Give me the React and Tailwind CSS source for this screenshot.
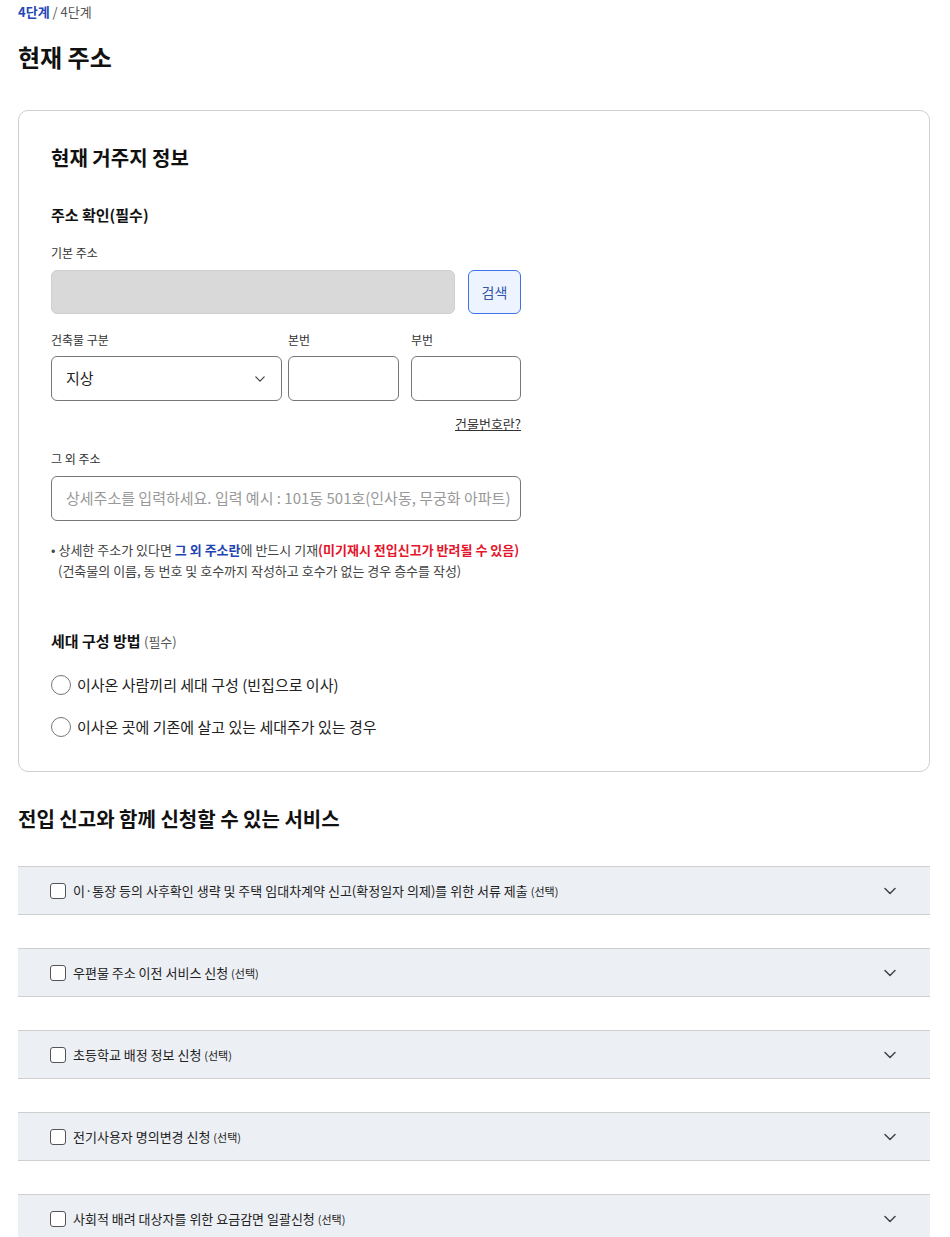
import React from 'react';

const services = [
    '이·통장 등의 사후확인 생략 및 주택 임대차계약 신고(확정일자 의제)를 위한 서류 제출',
    '우편물 주소 이전 서비스 신청',
    '초등학교 배정 정보 신청',
    '전기사용자 명의변경 신청',
    '사회적 배려 대상자를 위한 요금감면 일괄신청',
];

function Chevron({ className }) {
    return (
        <svg className={className} width="12" height="8" viewBox="0 0 12 8" fill="none">
            <path d="M1 1.5L6 6.5L11 1.5" stroke="#444" strokeWidth="1.5" strokeLinecap="round" strokeLinejoin="round" />
        </svg>
    );
}

function Radio({ label }) {
    return (
        <label className="flex items-center h-[20px]">
            <span className="w-[20px] h-[20px] rounded-full border-[1.5px] border-[#777] bg-white" />
            <span className="ml-[6px] text-[15px] leading-[20px] text-[#222]">{label}</span>
        </label>
    );
}

function ServiceRow({ text }) {
    return (
        <div className="h-[49px] border-y border-[#cfcfcf] bg-[#eceff4] flex items-center pl-[32px] pr-[34px]">
            <span className="w-[16px] h-[16px] rounded-[3px] border border-[#555] bg-white shrink-0" />
            <span className="ml-[7px] text-[13px] leading-[18px] text-[#222]">
                {text} <span className="text-[11px]">(선택)</span>
            </span>
            <Chevron className="ml-auto" />
        </div>
    );
}

export default function App() {
    return (
        <div className="pl-[18px] pr-[20px] pb-[40px] bg-white text-[#111]" style={{ fontFamily: '"Noto Sans CJK KR", "Noto Sans", sans-serif' }}>
            <div className="pt-[3px] text-[13px] leading-[18px]">
                <span className="font-bold text-[#2547b5]">4단계</span>
                <span className="text-[#555]"> / 4단계</span>
            </div>
            <h1 className="mt-[20px] text-[24px] leading-[32px] font-bold">현재 주소</h1>

            <div className="mt-[37px] border border-[#cfcfcf] rounded-[10px] px-[32px] pt-[33px] pb-[34px]">
                <h2 className="text-[20px] leading-[28px] font-bold">현재 거주지 정보</h2>

                <div className="w-[470px]">
                    <h3 className="mt-[32px] text-[15px] leading-[22px] font-bold">주소 확인(필수)</h3>

                    <div className="mt-[18px] text-[12px] leading-[18px] text-[#333]">기본 주소</div>
                    <div className="mt-[8px] flex">
                        <div className="w-[404px] h-[44px] rounded-[6px] bg-[#d9d9d9] border border-[#cfcfcf]" />
                        <button className="ml-[13px] w-[53px] h-[44px] rounded-[6px] border border-[#3b74e8] bg-[#eef4ff] text-[14px] text-[#3355aa]">
                            검색
                        </button>
                    </div>

                    <div className="mt-[17px] flex text-[12px] leading-[18px] text-[#333]">
                        <span className="w-[231px]">건축물 구분</span>
                        <span className="ml-[6px] w-[111px]">본번</span>
                        <span className="ml-[12px]">부번</span>
                    </div>
                    <div className="mt-[7px] flex">
                        <div className="w-[231px] h-[45px] rounded-[6px] border border-[#777] flex items-center pl-[14px] pr-[16px]">
                            <span className="text-[15px] text-[#222]">지상</span>
                            <Chevron className="ml-auto w-[10px]" />
                        </div>
                        <div className="ml-[6px] w-[111px] h-[45px] rounded-[6px] border border-[#777]" />
                        <div className="ml-[12px] w-[110px] h-[45px] rounded-[6px] border border-[#777]" />
                    </div>

                    <div className="mt-[14px] text-right text-[13px] leading-[18px]">
                        <a className="underline text-[#333]">건물번호란?</a>
                    </div>

                    <div className="mt-[17px] text-[12px] leading-[18px] text-[#333]">그 외 주소</div>
                    <div className="mt-[8px] h-[45px] rounded-[6px] border border-[#777] flex items-center pl-[14px]">
                        <span className="text-[15px] text-[#999]">상세주소를 입력하세요. 입력 예시 : 101동 501호(인사동, 무궁화 아파트)</span>
                    </div>

                    <div className="mt-[18px] text-[13px] leading-[21px] text-[#444] whitespace-nowrap">
                        <div className="h-[21px]">
                            <span className="mr-[3px]">•</span>상세한 주소가 있다면{' '}
                            <span className="font-bold text-[#1f45b0]">그 외 주소란</span>에 반드시 기재
                            <span className="font-bold text-[#e5152b]">(미기재시 전입신고가 반려될 수 있음)</span>
                        </div>
                        <div className="h-[21px] pl-[7px]">(건축물의 이름, 동 번호 및 호수까지 작성하고 호수가 없는 경우 층수를 작성)</div>
                    </div>
                </div>

                <div className="mt-[50px] text-[15px] leading-[20px]">
                    <span className="font-bold">세대 구성 방법</span> <span className="text-[13px] text-[#555]">(필수)</span>
                </div>
                <div className="mt-[23px] flex flex-col gap-[22px]">
                    <Radio label="이사온 사람끼리 세대 구성 (빈집으로 이사)" />
                    <Radio label="이사온 곳에 기존에 살고 있는 세대주가 있는 경우" />
                </div>
            </div>

            <h2 className="mt-[33px] text-[20px] leading-[28px] font-bold">전입 신고와 함께 신청할 수 있는 서비스</h2>
            <div className="mt-[33px] flex flex-col gap-[33px]">
                {services.map((s, i) => (
                    <ServiceRow key={i} text={s} />
                ))}
            </div>
        </div>
    );
}
